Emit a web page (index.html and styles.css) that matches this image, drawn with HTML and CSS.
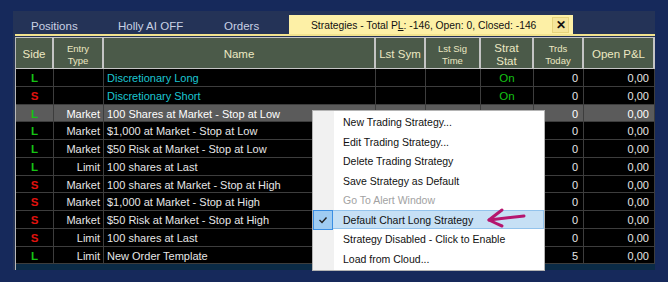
FILE: index.html
```html
<!DOCTYPE html>
<html lang="en">
<head>
    <meta charset="UTF-8">
    <title>Strategies</title>
    <link rel="stylesheet" href="styles.css">
</head>
<body>
    <div class="window">
        <div class="tabs">
            <div class="tab t1">Positions</div>
            <div class="tab t2">Holly AI OFF</div>
            <div class="tab t3">Orders</div>
            <div class="tab active">
                <span>Strategies - Total P<u>L</u>: -146, Open: 0, Closed: -146</span>
                <span class="close">&#x2715;</span>
            </div>
        </div>
        <div class="grid">
            <div class="hd">Side</div>
            <div class="hd small">Entry<br>Type</div>
            <div class="hd">Name</div>
            <div class="hd">Lst Sym</div>
            <div class="hd small">Lst Sig<br>Time</div>
            <div class="hd">Strat<br>Stat</div>
            <div class="hd small">Trds<br>Today</div>
            <div class="hd">Open P&amp;L</div>

            <div class="c side long">L</div><div class="c"></div><div class="c name disc">Discretionary Long</div><div class="c"></div><div class="c"></div><div class="c on">On</div><div class="c num">0</div><div class="c num">0,00</div>
            <div class="c side short">S</div><div class="c"></div><div class="c name disc">Discretionary Short</div><div class="c"></div><div class="c"></div><div class="c on">On</div><div class="c num">0</div><div class="c num">0,00</div>
            <div class="c sel side long">L</div><div class="c sel type">Market</div><div class="c sel name">100 Shares at Market - Stop at Low</div><div class="c sel"></div><div class="c sel"></div><div class="c sel"></div><div class="c sel num">0</div><div class="c sel num">0,00</div>
            <div class="c side long">L</div><div class="c type">Market</div><div class="c name">$1,000 at Market - Stop at Low</div><div class="c"></div><div class="c"></div><div class="c"></div><div class="c num">0</div><div class="c num">0,00</div>
            <div class="c side long">L</div><div class="c type">Market</div><div class="c name">$50 Risk at Market - Stop at Low</div><div class="c"></div><div class="c"></div><div class="c"></div><div class="c num">0</div><div class="c num">0,00</div>
            <div class="c side long">L</div><div class="c type">Limit</div><div class="c name">100 shares at Last</div><div class="c"></div><div class="c"></div><div class="c"></div><div class="c num">0</div><div class="c num">0,00</div>
            <div class="c side short">S</div><div class="c type">Market</div><div class="c name">100 shares at Market - Stop at High</div><div class="c"></div><div class="c"></div><div class="c"></div><div class="c num">0</div><div class="c num">0,00</div>
            <div class="c side short">S</div><div class="c type">Market</div><div class="c name">$1,000 at Market - Stop at High</div><div class="c"></div><div class="c"></div><div class="c"></div><div class="c num">0</div><div class="c num">0,00</div>
            <div class="c side short">S</div><div class="c type">Market</div><div class="c name">$50 Risk at Market - Stop at High</div><div class="c"></div><div class="c"></div><div class="c"></div><div class="c num">0</div><div class="c num">0,00</div>
            <div class="c side short">S</div><div class="c type">Limit</div><div class="c name">100 shares at Last</div><div class="c"></div><div class="c"></div><div class="c"></div><div class="c num">0</div><div class="c num">0,00</div>
            <div class="c side long">L</div><div class="c type">Limit</div><div class="c name">New Order Template</div><div class="c"></div><div class="c"></div><div class="c"></div><div class="c num">5</div><div class="c num">0,00</div>
        </div>
        <div class="footer"></div>
    </div>

    <div class="menu">
        <div class="item">New Trading Strategy...</div>
        <div class="item">Edit Trading Strategy...</div>
        <div class="item">Delete Trading Strategy</div>
        <div class="item">Save Strategy as Default</div>
        <div class="item disabled">Go To Alert Window</div>
        <div class="item checked">
            <span class="check"><svg width="10" height="8" viewBox="0 0 10 8"><polyline points="1.5,4 4,6.5 8.5,1.5" fill="none" stroke="#222" stroke-width="1.4"/></svg></span>
            Default Chart Long Strategy
        </div>
        <div class="item">Strategy Disabled - Click to Enable</div>
        <div class="item">Load from Cloud...</div>
    </div>

    <svg class="arrow" width="44" height="24" viewBox="0 0 44 24">
        <path d="M5 14 Q22 12 40 10" fill="none" stroke="#b5166f" stroke-width="3" stroke-linecap="round"/>
        <path d="M18 4 Q10 10 5 14 Q11 17 18 20" fill="none" stroke="#b5166f" stroke-width="3" stroke-linecap="round" stroke-linejoin="round"/>
    </svg>
</body>
</html>
```

FILE: styles.css
```css
body {
    margin: 0;
    background: #16295b;
    font-family: "Liberation Sans", Arial, sans-serif;
    font-size: 11px;
}
.window {
    margin: 11px 0 0 13px;
    width: 642px;
    background: #243357;
}
.tabs {
    display: flex;
    height: 23px;
    border-bottom: 2px solid #f2e38e;
    margin-left: 2px;
    color: #c9d1e4;
    font-size: 11.5px;
    white-space: nowrap;
}
.tab {
    padding-left: 16px;
    line-height: 30px;
}
.t1 { width: 71px; }
.t2 { width: 90px; }
.t3 { width: 65px; }
.tab.active {
    margin-top: 4px;
    width: 262px;
    padding-left: 22px;
    line-height: 22px;
    background: #fdf0a6;
    color: #111;
    font-size: 10.3px;
    display: flex;
    justify-content: space-between;
}
.close {
    width: 15px;
    height: 14px;
    margin: 2px 4px 0 0;
    border: 1px solid #e6d47c;
    background: #f5e59a;
    font-size: 12px;
    font-weight: bold;
    line-height: 14px;
    text-align: center;
}
.grid {
    display: grid;
    grid-template-columns: 38px 50px 272px 50px 55px 53px 50px 71px;
    grid-template-rows: 32px repeat(11, 17.75px);
    margin: 1px 0 0 2px;
    border-left: 1px solid #b9b9b9;
    background: #000;
    color: #e6e6e6;
}
.hd {
    background: #4b5a49;
    color: #ece8c2;
    border-top: 1px solid #c4c4c4;
    border-right: 2px solid #c4c4c4;
    border-bottom: 1px solid #c4c4c4;
    padding-top: 3px;
    display: flex;
    align-items: center;
    justify-content: center;
    text-align: center;
    font-size: 11.5px;
    line-height: 13px;
}
.hd.small {
    font-size: 9.5px;
    line-height: 12px;
}
.c {
    border-right: 1px solid #3d3d3d;
    border-bottom: 1px solid #3d3d3d;
    line-height: 19px;
    white-space: nowrap;
    overflow: hidden;
}
.sel {
    background: #5b5b5b;
    color: #fff;
}
.side {
    text-align: center;
    font-weight: bold;
    font-size: 11.5px;
}
.long { color: #16c414; }
.short { color: #e2120e; }
.type {
    text-align: right;
    padding-right: 3px;
}
.name {
    padding-left: 3px;
}
.disc { color: #1cc6d2; }
.on {
    text-align: center;
    color: #14c014;
    font-size: 11.5px;
}
.num {
    text-align: right;
    padding-right: 5px;
}
.footer {
    height: 6px;
    margin-left: 2px;
    border-left: 1px solid #b9b9b9;
    background: #0b2b46;
}
.menu {
    position: absolute;
    left: 312px;
    top: 110px;
    width: 231px;
    padding: 1px 0 2px;
    background: linear-gradient(to right, #f1f1f1 21px, #fff 21px);
    border: 1px solid #b4b4b4;
    color: #111;
    font-size: 10.5px;
}
.item {
    height: 19.5px;
    line-height: 20px;
    padding-left: 30px;
    box-sizing: border-box;
    position: relative;
}
.disabled { color: #a2a2a2; }
.checked {
    background: #c6e0f5;
    border: 1px solid #93c3ec;
    line-height: 18px;
    padding-left: 29px;
}
.check {
    position: absolute;
    left: -1px;
    top: -1px;
    width: 18px;
    height: 18px;
    background: #9fccf2;
    border: 1px solid #3a8ee3;
    display: flex;
    align-items: center;
    justify-content: center;
}
.arrow {
    position: absolute;
    left: 484px;
    top: 206px;
}
```
